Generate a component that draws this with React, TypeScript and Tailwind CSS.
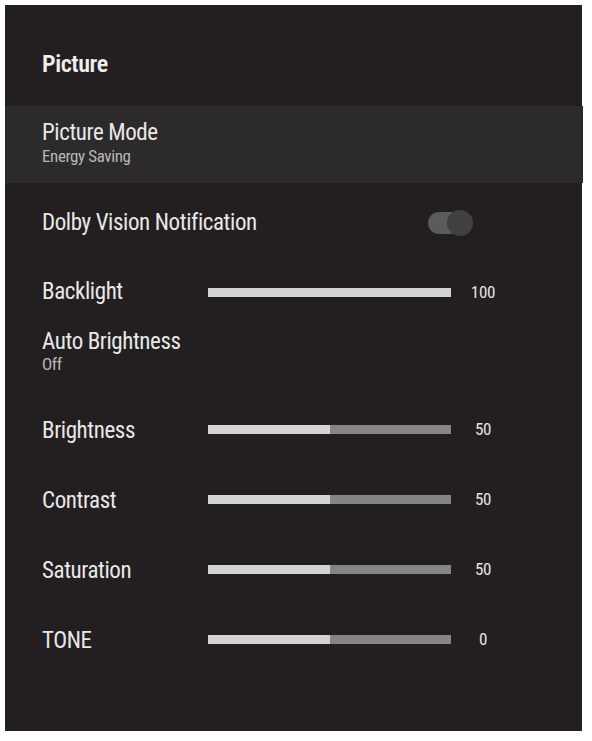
type SliderProps = { label: string; value: number; shown: string };

function SliderRow({ label, value, shown }: SliderProps) {
  return (
    <div className="flex h-[70px] items-center">
      <div className="w-[166px] pt-[3px] text-[23px] leading-[30px] tracking-[-0.4px] text-[#e8e8e8]">{label}</div>
      <div className="flex h-[9px] w-[243px] bg-[#858585]">
        <div className="h-full bg-[#d3d3d3]" style={{ width: `${value}%` }} />
      </div>
      <div className="ml-[12px] w-[40px] text-center text-[17px] leading-[20px] tracking-[-0.3px] text-[#e4e4e4]">{shown}</div>
    </div>
  );
}

export default function App() {
  return (
    <div className="min-h-[741px] bg-white p-[5px] font-['Roboto_Condensed',_'Roboto',_sans-serif]">
      <div className="flex h-[726px] w-[577px] flex-col bg-[#231f20]">
        <div className="h-[101px] pl-[37px] pt-[44px]">
          <div className="text-[24px] font-semibold leading-[30px] tracking-[-0.4px] text-[#eeeeee]">Picture</div>
        </div>

        <div className="h-[77px] w-[578px] bg-[#2c2a2b] pl-[37px] pt-[14px]">
          <div className="text-[23px] leading-[26px] tracking-[-0.4px] text-[#e8e8e8]">Picture Mode</div>
          <div className="mt-[1px] text-[17px] leading-[18px] tracking-[-0.4px] text-[#b8b8b8]">Energy Saving</div>
        </div>

        <div className="flex h-[80px] items-center pl-[37px]">
          <div className="w-[386px] text-[23px] leading-[30px] tracking-[-0.4px] text-[#e8e8e8]">Dolby Vision Notification</div>
          <div className="relative h-[22px] w-[38px] rounded-full bg-[#5b5b5b]">
            <div className="absolute left-[19px] top-[-2px] h-[26px] w-[26px] rounded-full bg-[#404040]" />
          </div>
        </div>

        <div className="flex h-[58px] items-center pl-[37px]">
          <div className="w-[166px] text-[23px] leading-[30px] tracking-[-0.4px] text-[#e8e8e8]">Backlight</div>
          <div className="h-[9px] w-[243px] bg-[#d3d3d3]" />
          <div className="ml-[12px] w-[40px] text-center text-[17px] leading-[20px] tracking-[-0.3px] text-[#e4e4e4]">100</div>
        </div>

        <div className="h-[73px] pl-[37px] pt-[8px]">
          <div className="text-[23px] leading-[26px] tracking-[-0.4px] text-[#e8e8e8]">Auto Brightness</div>
          <div className="text-[17px] leading-[18px] tracking-[-0.4px] text-[#b8b8b8]">Off</div>
        </div>

        <div className="pl-[37px]">
          <SliderRow label="Brightness" value={50} shown="50" />
          <SliderRow label="Contrast" value={50} shown="50" />
          <SliderRow label="Saturation" value={50} shown="50" />
          <SliderRow label="TONE" value={50} shown="0" />
        </div>
      </div>
    </div>
  );
}
